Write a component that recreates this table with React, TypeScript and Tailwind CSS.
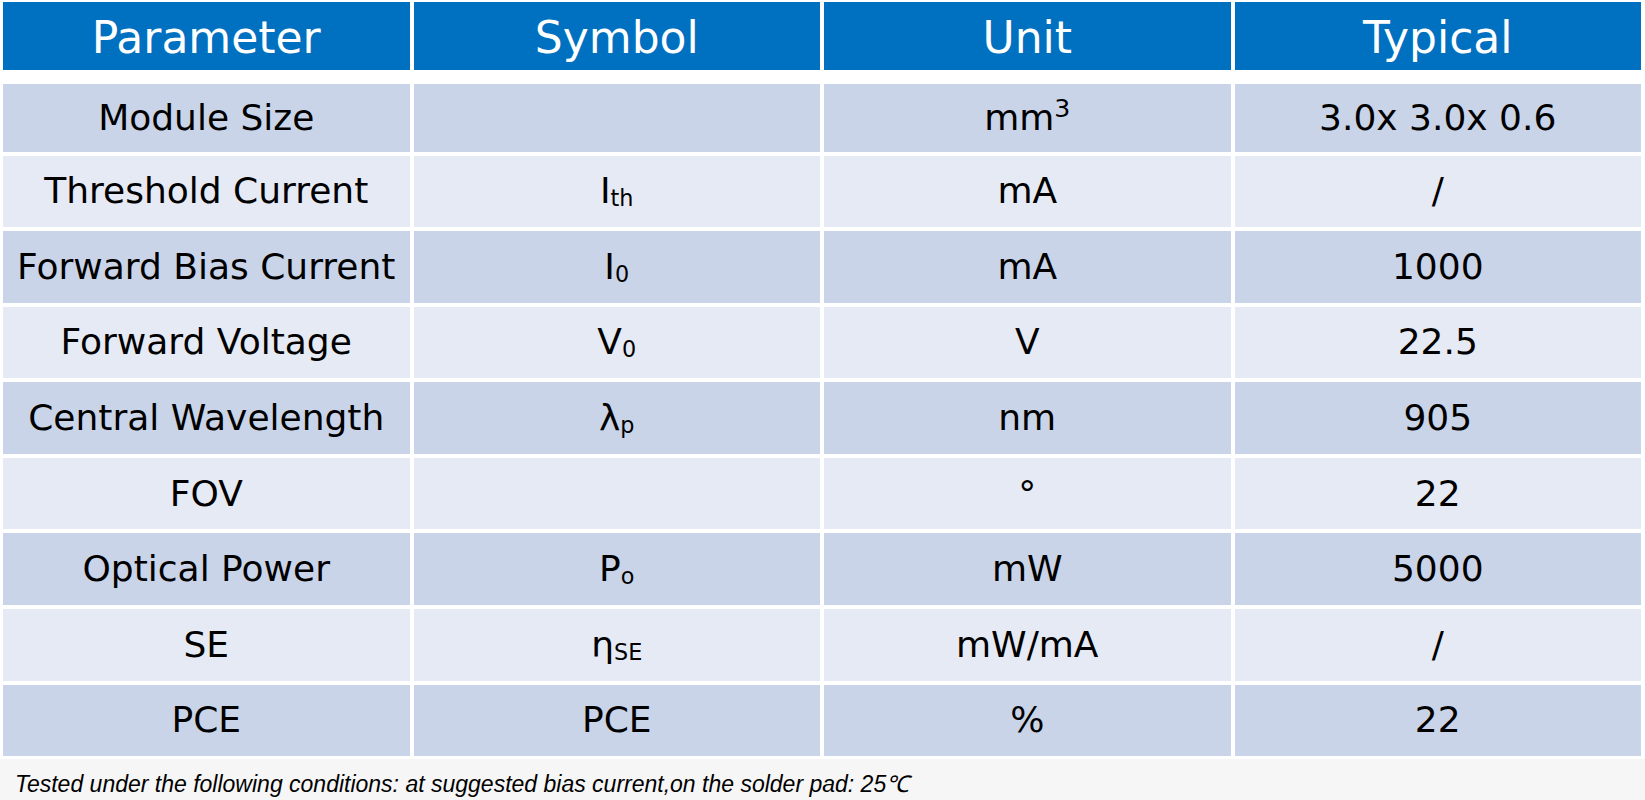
import type { ReactNode } from 'react';

type Row = {
  param: string;
  symbol: ReactNode;
  unit: ReactNode;
  typical: string;
};

const sub = (base: string, s: string) => (
  <span>
    {base}
    <sub className="text-[0.62em] relative top-[0.12em] align-baseline">{s}</sub>
  </span>
);

const ROWS: Row[] = [
  {
    param: 'Module Size',
    symbol: '',
    unit: (
      <span>
        mm<sup className="text-[0.7em] relative -top-[0.5em] align-baseline">3</sup>
      </span>
    ),
    typical: '3.0x 3.0x 0.6',
  },
  { param: 'Threshold Current', symbol: sub('I', 'th'), unit: 'mA', typical: '/' },
  { param: 'Forward Bias Current', symbol: sub('I', '0'), unit: 'mA', typical: '1000' },
  { param: 'Forward Voltage', symbol: sub('V', '0'), unit: 'V', typical: '22.5' },
  { param: 'Central Wavelength', symbol: sub('λ', 'p'), unit: 'nm', typical: '905' },
  { param: 'FOV', symbol: '', unit: '°', typical: '22' },
  { param: 'Optical Power', symbol: sub('P', 'o'), unit: 'mW', typical: '5000' },
  { param: 'SE', symbol: sub('η', 'SE'), unit: 'mW/mA', typical: '/' },
  { param: 'PCE', symbol: 'PCE', unit: '%', typical: '22' },
];

const HEADERS = ['Parameter', 'Symbol', 'Unit', 'Typical'];

export default function App() {
  return (
    <div className="w-[1645px] h-[800px] bg-white flex flex-col font-['DejaVu_Sans',sans-serif] text-black">
      <div className="pt-[2px] pl-[3px] pr-[4px]">
        <div className="grid grid-cols-4 gap-x-[4px] h-[68px]">
          {HEADERS.map((h) => (
            <div
              key={h}
              className="bg-[#0070c0] text-white text-[44px] leading-none flex items-center justify-center pt-[4px]"
            >
              {h}
            </div>
          ))}
        </div>

        <div className="mt-[14px] flex flex-col gap-y-[4px]">
          {ROWS.map((r, i) => (
            <div
              key={r.param}
              className={
                'grid grid-cols-4 gap-x-[4px] text-[36px] leading-none ' +
                (i === 0 ? 'h-[67.5px]' : 'h-[71.6px]')
              }
            >
              {[r.param, r.symbol, r.unit, r.typical].map((c, j) => (
                <div
                  key={j}
                  className={
                    'flex items-center justify-center whitespace-nowrap ' +
                    (i % 2 === 0 ? 'bg-[#c9d4e8]' : 'bg-[#e6eaf4]')
                  }
                >
                  {c}
                </div>
              ))}
            </div>
          ))}
        </div>
      </div>

      <div className="mt-[3px] flex-1 bg-[#f6f6f6] pt-[12px] pl-[15px]">
        <p className="font-['Liberation_Sans',sans-serif] italic text-[23px] leading-[26px] text-black">
          Tested under the following conditions: at suggested bias current,on the solder pad: 25℃
        </p>
      </div>
    </div>
  );
}
